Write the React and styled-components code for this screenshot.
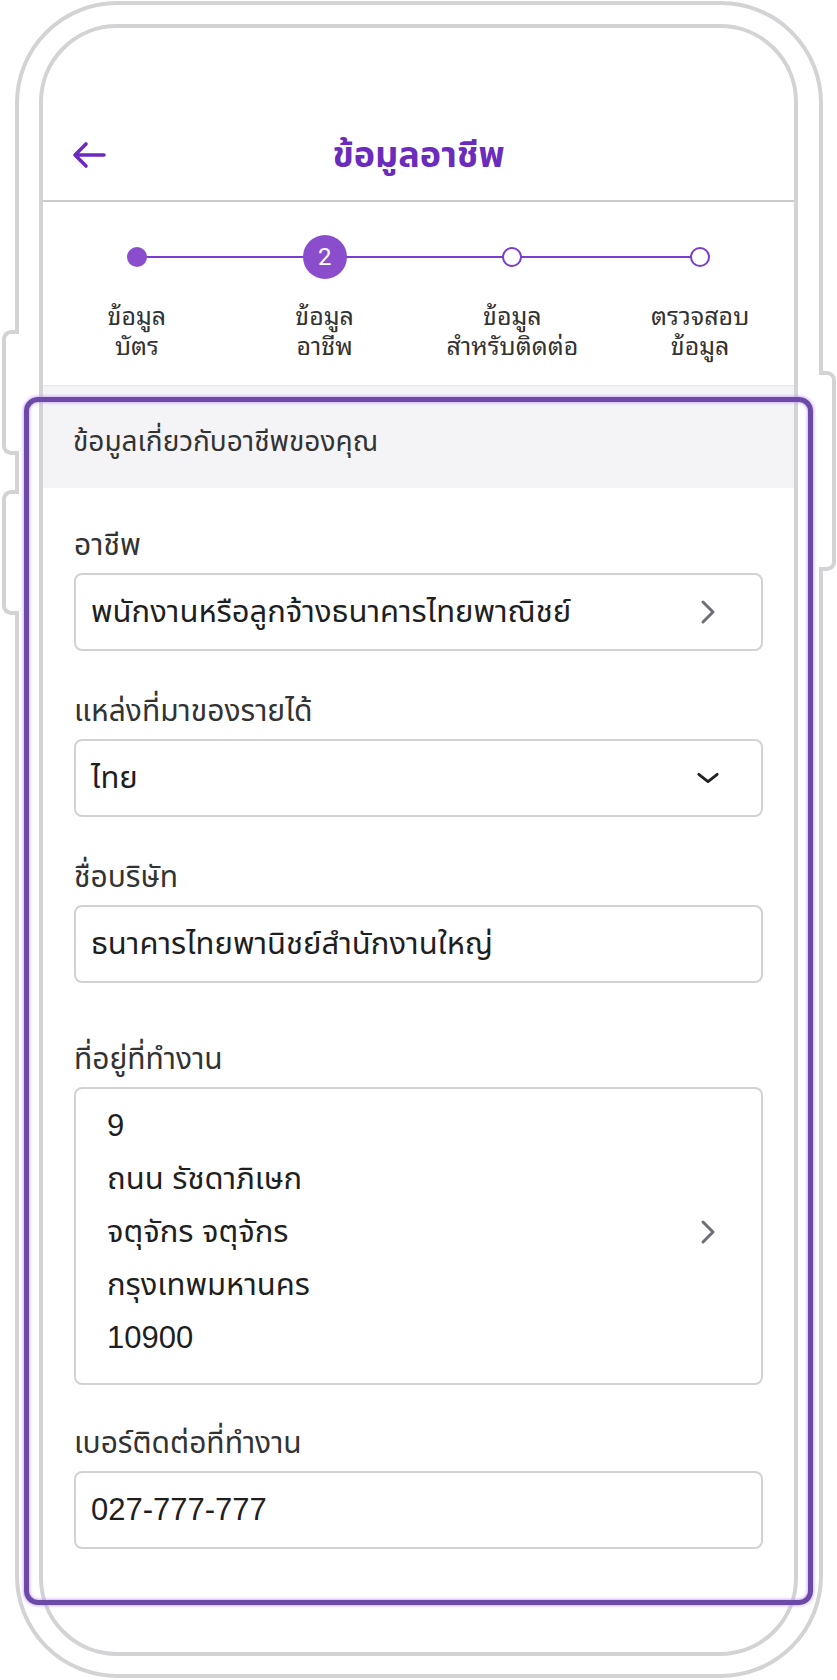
import styled, { createGlobalStyle } from 'styled-components';

const GlobalStyle = createGlobalStyle`
  html, body {
    margin: 0;
    padding: 0;
    background: #ffffff;
  }
  body {
    font-family: "Liberation Sans", "Noto Sans Thai", "Noto Sans", sans-serif;
    color: #222222;
  }
  * {
    box-sizing: border-box;
  }
`;

const steps = [
  { id: 1, label: 'ข้อมูล\nบัตร', state: 'done' },
  { id: 2, label: 'ข้อมูล\nอาชีพ', state: 'current' },
  { id: 3, label: 'ข้อมูล\nสำหรับติดต่อ', state: 'todo' },
  { id: 4, label: 'ตรวจสอบ\nข้อมูล', state: 'todo' },
];

const addressLines = ['9', 'ถนน รัชดาภิเษก', 'จตุจักร จตุจักร', 'กรุงเทพมหานคร', '10900'];

function BackArrow() {
  return (
    <svg width="36" height="28" viewBox="0 0 36 28" fill="none">
      <path
        d="M33 14H4M15 3L4 14L15 25"
        stroke="#6c2bc0"
        strokeWidth="3.6"
        strokeLinecap="round"
        strokeLinejoin="round"
      />
    </svg>
  );
}

function ChevronRight() {
  return (
    <svg width="16" height="26" viewBox="0 0 16 26" fill="none">
      <path
        d="M3 3L13 13L3 23"
        stroke="#6e6e78"
        strokeWidth="3"
        strokeLinecap="round"
        strokeLinejoin="round"
      />
    </svg>
  );
}

function ChevronDown() {
  return (
    <svg width="26" height="14" viewBox="0 0 26 14" fill="none">
      <path
        d="M3 3L13 11L23 3"
        stroke="#222222"
        strokeWidth="3"
        strokeLinecap="round"
        strokeLinejoin="round"
      />
    </svg>
  );
}

export default function App() {
  return (
    <>
      <GlobalStyle />
      <Page>
        <Device>
          <SideButton $side="left" $top={325} $height={125} />
          <SideButton $side="left" $top={485} $height={125} />
          <SideButton $side="right" $top={366} $height={200} />

          <Screen>
            <Header>
              <HeaderRow>
                <BackButton type="button" aria-label="back">
                  <BackArrow />
                </BackButton>
                <Title>ข้อมูลอาชีพ</Title>
                <span />
              </HeaderRow>
            </Header>

            <Stepper>
              <Track />
              {steps.map((step) => (
                <Step key={step.id}>
                  <MarkerRow>
                    <Marker $state={step.state}>
                      {step.state === 'current' ? step.id : null}
                    </Marker>
                  </MarkerRow>
                  <StepLabel>{step.label}</StepLabel>
                </Step>
              ))}
            </Stepper>

            <SectionHeader>ข้อมูลเกี่ยวกับอาชีพของคุณ</SectionHeader>

            <Form>
              <Field>
                <Label>อาชีพ</Label>
                <Box>
                  <Value>พนักงานหรือลูกจ้างธนาคารไทยพาณิชย์</Value>
                  <IconSlot>
                    <ChevronRight />
                  </IconSlot>
                </Box>
              </Field>

              <Field $gap={40}>
                <Label>แหล่งที่มาของรายได้</Label>
                <Box>
                  <Value>ไทย</Value>
                  <IconSlot>
                    <ChevronDown />
                  </IconSlot>
                </Box>
              </Field>

              <Field $gap={40}>
                <Label>ชื่อบริษัท</Label>
                <Box>
                  <Value>ธนาคารไทยพานิชย์สำนักงานใหญ่</Value>
                </Box>
              </Field>

              <Field $gap={56}>
                <Label>ที่อยู่ที่ทำงาน</Label>
                <AddressBox>
                  <AddressLines>
                    {addressLines.map((line) => (
                      <div key={line}>{line}</div>
                    ))}
                  </AddressLines>
                  <IconSlot>
                    <ChevronRight />
                  </IconSlot>
                </AddressBox>
              </Field>

              <Field $gap={38}>
                <Label>เบอร์ติดต่อที่ทำงาน</Label>
                <Box>
                  <Value>027-777-777</Value>
                </Box>
              </Field>
            </Form>
          </Screen>
        </Device>

        <Highlight />
      </Page>
    </>
  );
}

/* Styled Components */
const Page = styled.div`
  position: relative;
  width: 837px;
  height: 1680px;
  padding: 1px 0 0 15px;
  overflow: hidden;
`;

const Device = styled.div`
  position: relative;
  width: 808px;
  height: 1677px;
  padding: 19px 21px 18px 20px;
  border: 4px solid #d3d3d6;
  border-radius: 102px;
`;

const SideButton = styled.div`
  position: absolute;
  top: ${({ $top }) => $top}px;
  height: ${({ $height }) => $height}px;
  width: 17px;
  background: #ffffff;
  border: 4px solid #d3d3d6;
  ${({ $side }) =>
    $side === 'left'
      ? `left: -17px; border-right: none; border-radius: 9px 0 0 9px;`
      : `left: 800px; border-left: none; border-radius: 0 9px 9px 0;`}
`;

const Screen = styled.div`
  display: flex;
  flex-direction: column;
  height: 100%;
  overflow: hidden;
  background: #ffffff;
  border: 4px solid #d3d3d6;
  border-radius: 78px;
`;

const Header = styled.header`
  padding: 91px 30px 9px;
  border-bottom: 2px solid #cbcbcf;
`;

const HeaderRow = styled.div`
  display: grid;
  grid-template-columns: 1fr auto 1fr;
  align-items: center;
  height: 72px;
`;

const BackButton = styled.button`
  display: flex;
  align-items: center;
  justify-self: start;
  margin-left: -2px;
  padding: 0;
  background: none;
  border: none;
  cursor: pointer;
`;

const Title = styled.h1`
  margin: 0;
  color: #6b2cbd;
  font-size: 36px;
  font-weight: 700;
  line-height: 1;
`;

const Stepper = styled.div`
  position: relative;
  display: grid;
  grid-template-columns: repeat(4, 1fr);
  padding: 33px 0 26px;
`;

const Track = styled.div`
  position: absolute;
  top: 54px;
  left: 94px;
  right: 94px;
  height: 2px;
  background: #7a3dcf;
`;

const Step = styled.div`
  display: flex;
  flex-direction: column;
  align-items: center;
`;

const MarkerRow = styled.div`
  position: relative;
  display: flex;
  align-items: center;
  justify-content: center;
  height: 44px;
`;

const Marker = styled.div`
  display: flex;
  align-items: center;
  justify-content: center;
  border-radius: 50%;
  color: #ffffff;
  font-family: Roboto, "Liberation Sans", sans-serif;
  font-size: 24px;

  ${({ $state }) => {
    if ($state === 'current') {
      return `width: 44px; height: 44px; background: #8a4ecd;`;
    }
    if ($state === 'done') {
      return `width: 20px; height: 20px; background: #8a4ecd;`;
    }
    return `width: 20px; height: 20px; background: #ffffff; border: 2.5px solid #7a3dcf;`;
  }}
`;

const StepLabel = styled.div`
  margin-top: 20px;
  color: #333333;
  font-family: "Noto Sans Thai Looped", "Loma", "Liberation Sans", sans-serif;
  font-size: 25px;
  line-height: 30px;
  text-align: center;
  white-space: pre-line;
`;

const SectionHeader = styled.div`
  display: flex;
  align-items: center;
  height: 103px;
  padding: 10px 30px 0;
  color: #333333;
  font-size: 28px;
  background: #f4f4f7;
  border-top: 1px solid #e8e8eb;
`;

const Form = styled.div`
  display: flex;
  flex-direction: column;
  padding: 37px 31px 0;
`;

const Field = styled.div`
  display: flex;
  flex-direction: column;
  margin-top: ${({ $gap }) => $gap || 0}px;
`;

const Label = styled.div`
  margin-bottom: 8px;
  color: #333333;
  font-size: 30px;
  line-height: 40px;
`;

const Box = styled.div`
  display: flex;
  align-items: center;
  justify-content: space-between;
  height: 78px;
  padding: 0 41px 0 15px;
  color: #1f1f1f;
  font-size: 31px;
  border: 2px solid #d2d2d6;
  border-radius: 8px;
`;

const AddressBox = styled(Box)`
  height: 298px;
  padding: 10px 41px 19px 31px;
`;

const Value = styled.span`
  white-space: nowrap;
`;

const AddressLines = styled.div`
  line-height: 53px;
`;

const IconSlot = styled.span`
  display: flex;
  align-items: center;
  justify-content: center;
  width: 24px;
`;

const Highlight = styled.div`
  position: absolute;
  top: 397px;
  left: 24px;
  width: 789px;
  height: 1208px;
  border: 5px solid #6b4ba7;
  border-radius: 14px;
  box-shadow: 0 0 3px 1px rgba(196, 150, 245, 0.75), inset 0 0 3px 1px rgba(196, 150, 245, 0.75);
  pointer-events: none;
`;
